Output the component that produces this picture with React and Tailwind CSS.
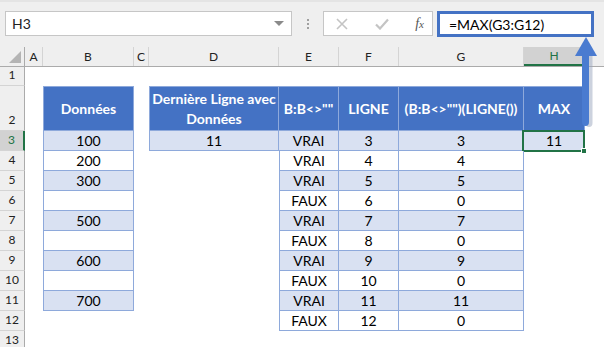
import React from 'react';

const font = { fontFamily: 'Lato, "Open Sans", sans-serif' };

const cols = [
  ['A', 'w-[18px]'],
  ['B', 'w-[91px]'],
  ['C', 'w-[15px]'],
  ['D', 'w-[130px]'],
  ['E', 'w-[60px]'],
  ['F', 'w-[60px]'],
  ['G', 'w-[125px]'],
  ['H', 'w-[61px]'],
];

const band = (n) => (n % 2 === 1 ? 'o' : 'e');

const rows = [
  { n: 1, h: 'h-[19px]', c: {} },
  {
    n: 2,
    h: 'h-[45px]',
    c: {
      B: ['Données', 'h'],
      D: [<>Dernière Ligne avec<br />Données</>, 'h'],
      E: ['B:B<>""', 'h'],
      F: ['LIGNE', 'h'],
      G: ['(B:B<>"")(LIGNE())', 'h'],
      H: ['MAX', 'h'],
    },
  },
  { n: 3, c: { B: ['100'], D: ['11'], E: ['VRAI'], F: ['3'], G: ['3'], H: ['11'] } },
  { n: 4, c: { B: ['200'], E: ['VRAI'], F: ['4'], G: ['4'] } },
  { n: 5, c: { B: ['300'], E: ['VRAI'], F: ['5'], G: ['5'] } },
  { n: 6, c: { B: [''], E: ['FAUX'], F: ['6'], G: ['0'] } },
  { n: 7, c: { B: ['500'], E: ['VRAI'], F: ['7'], G: ['7'] } },
  { n: 8, c: { B: [''], E: ['FAUX'], F: ['8'], G: ['0'] } },
  { n: 9, c: { B: ['600'], E: ['VRAI'], F: ['9'], G: ['9'] } },
  { n: 10, c: { B: [''], E: ['FAUX'], F: ['10'], G: ['0'] } },
  { n: 11, c: { B: ['700'], E: ['VRAI'], F: ['11'], G: ['11'] } },
  { n: 12, c: { E: ['FAUX'], F: ['12'], G: ['0'] } },
  { n: 13, c: {} },
];

function Cell({ row, col, w }) {
  const cell = row.c[col];
  if (!cell) return <div className={`${w} shrink-0`} />;
  const kind = cell[1] || band(row.n);
  const left = col === 'B' || col === 'D' || (col === 'E' && !row.c.D);
  const bg =
    kind === 'h'
      ? 'bg-[#4472c4] text-white font-bold leading-[20px]'
      : kind === 'o'
      ? 'bg-[#d9e1f2] text-black'
      : 'bg-white text-black';
  return (
    <div
      className={`${w} shrink-0 relative flex items-center justify-center text-center text-[14px] whitespace-nowrap border-r border-b border-[#8ea9db] ${
        left ? 'border-l' : ''
      } ${row.n === 2 ? 'border-t' : ''} ${bg}`}
    >
      {cell[0]}
      {row.n === 3 && col === 'H' && (
        <div className="absolute -left-[2px] -top-[1px] w-[63px] h-[22px] border-2 border-[#217346]">
          <div className="absolute -right-[4px] -bottom-[4px] w-[6px] h-[6px] bg-[#217346] border border-white" />
        </div>
      )}
    </div>
  );
}

function Row({ row }) {
  const sel = row.n === 3;
  return (
    <div className={`flex ${row.h || 'h-[20px]'}`}>
      <div
        className={`w-[25px] shrink-0 flex items-end justify-center pb-[1px] text-[12px] border-b border-[#d4d4d4] ${
          sel
            ? 'bg-[#d2d2d2] text-[#217346] border-r-2 border-r-[#217346]'
            : 'bg-[#efefef] text-[#222] border-r border-r-[#ababab]'
        }`}
      >
        {row.n}
      </div>
      {cols.map(([c, w]) => (
        <Cell key={c} row={row} col={c} w={w} />
      ))}
    </div>
  );
}

export default function App() {
  return (
    <div className="relative w-[604px] h-[347px] overflow-hidden bg-white" style={font}>
      {/* formula bar */}
      <div className="h-[47px] bg-[#efefef] border-t-2 border-[#e4e4e4] flex items-start pt-[9px] pl-[5px]">
        <div className="w-[287px] h-[25px] bg-white border border-[#c6c6c6] flex items-center justify-between pl-[6px] pr-[7px] text-[14px] text-[#222]">
          <span>H3</span>
          <span className="w-0 h-0 border-l-[5px] border-r-[5px] border-t-[5px] border-l-transparent border-r-transparent border-t-[#8a8a8a]" />
        </div>
        <div className="w-[31px] h-[25px] flex flex-col items-center justify-center gap-[2px]">
          <span className="w-[2px] h-[2px] bg-[#a0a0a0]" />
          <span className="w-[2px] h-[2px] bg-[#a0a0a0]" />
          <span className="w-[2px] h-[2px] bg-[#a0a0a0]" />
        </div>
        <div className="w-[110px] h-[25px] bg-white border border-[#c6c6c6] flex items-center justify-between pl-[12px] pr-[8px]">
          <svg width="12" height="12" viewBox="0 0 12 12">
            <path d="M1 1L11 11M11 1L1 11" stroke="#c4c4c4" strokeWidth="1.6" />
          </svg>
          <svg width="14" height="12" viewBox="0 0 14 12">
            <path d="M1 6.5L5 10.5L13 1.5" stroke="#c4c4c4" strokeWidth="2.2" fill="none" />
          </svg>
          <span className="text-[14px] italic text-[#555]" style={{ fontFamily: '"Liberation Serif", serif' }}>
            f<span className="text-[11px]">x</span>
          </span>
        </div>
        <div className="ml-[4px] w-[157px] h-[26px] bg-white border-[3px] border-[#4472c4] flex items-center pl-[9px] text-[14px] text-black">
          =MAX(G3:G12)
        </div>
      </div>

      {/* column headers */}
      <div className="flex h-[20px] bg-[#efefef] border-b border-[#ababab]">
        <div className="w-[25px] shrink-0 border-r border-[#ababab] flex items-end justify-end pr-[3px] pb-[3px]">
          <svg width="12" height="12" viewBox="0 0 12 12">
            <path d="M12 0 L12 12 L0 12 Z" fill="#b4b4b4" />
          </svg>
        </div>
        {cols.map(([c, w]) => (
          <div
            key={c}
            className={`${w} shrink-0 flex items-center justify-center text-[12px] border-r border-[#d4d4d4] ${
              c === 'H' ? 'bg-[#d2d2d2] text-[#217346] border-b-2 border-b-[#217346]' : 'text-[#222]'
            }`}
          >
            {c}
          </div>
        ))}
        <div className="flex-1" />
      </div>

      {rows.map((r) => (
        <Row key={r.n} row={r} />
      ))}

      {/* arrow from H3 to formula bar */}
      <svg className="absolute left-[574px] top-[36px]" width="26" height="94" viewBox="0 0 26 94">
        <path d="M10 19 H17 V86 Q17 90 13.5 90 Q10 90 10 86 Z" fill="#9aa6bd" opacity="0.5" transform="translate(1.5 1)" />
        <path d="M8 19 H15 V86 Q15 90 11.5 90 Q8 90 8 86 Z" fill="#4a7bd0" />
        <path d="M12 1 L23 20 L1 20 Z" fill="#4a7bd0" />
      </svg>
    </div>
  );
}
